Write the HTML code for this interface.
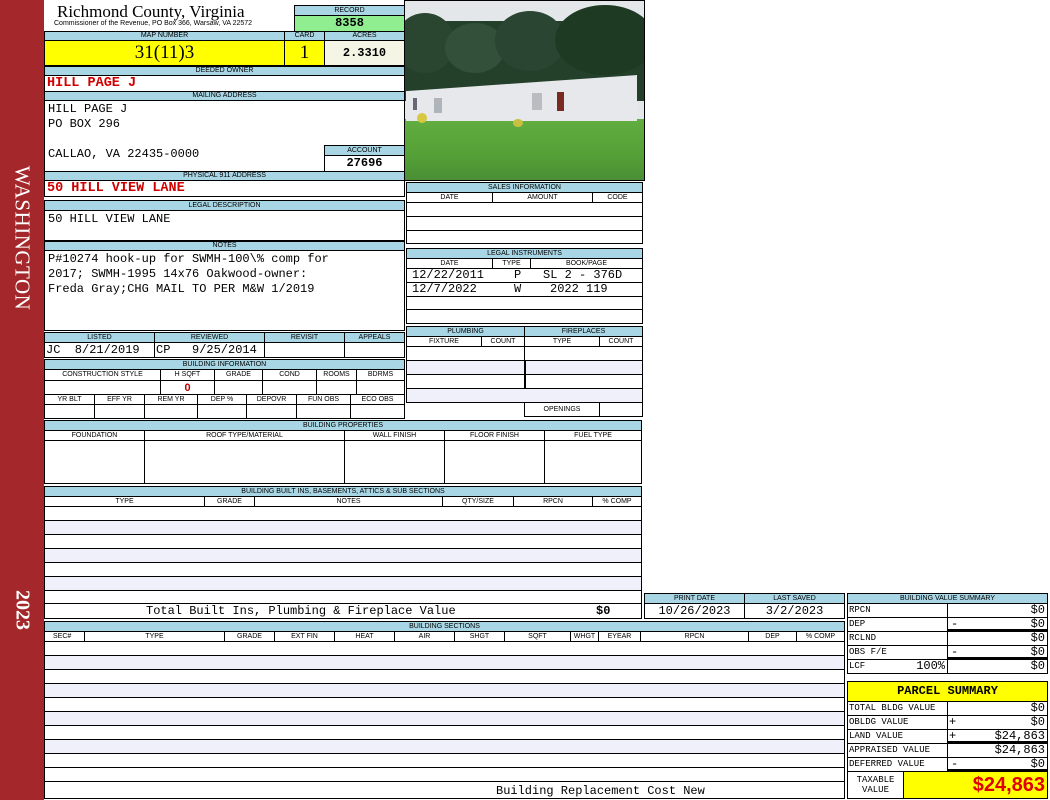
<!DOCTYPE html>
<html><head><meta charset="utf-8"><style>
*{box-sizing:border-box;margin:0;padding:0}
body{width:1050px;height:800px;background:#fff;position:relative;overflow:hidden;font-family:"Liberation Sans",sans-serif}
div{position:absolute}
.h{background:#a9d6e5;border:1px solid #000;font-size:7px;line-height:8px;text-align:center;color:#000;white-space:nowrap;overflow:hidden}
.b{border:1px solid #000;background:#fff}
.l{background:#f0f0fa}
.m{font-family:"Liberation Mono",monospace;font-size:12px;white-space:nowrap}
.s{font-size:9px!important}
.r{color:#d00000;font-weight:bold;font-size:13.5px}
</style></head><body>
<div style="left:0;top:0;width:44px;height:800px;background:#a4282b"></div>
<div style="left:22px;top:238px;transform:translate(-50%,-50%) rotate(90deg);color:#fff;font-family:'Liberation Serif',serif;font-size:21px;white-space:nowrap;letter-spacing:0.5px">WASHINGTON</div>
<div style="left:22px;top:610px;transform:translate(-50%,-50%) rotate(90deg);color:#fff;font-family:'Liberation Serif',serif;font-size:20px;font-weight:bold">2023</div>

<div style="left:57px;top:2px;font-family:'Liberation Serif',serif;font-size:17px;line-height:19px">Richmond County, Virginia</div>
<div style="left:54px;top:20px;font-size:7px;line-height:8px">Commissioner of the Revenue, PO Box 366, Warsaw, VA 22572</div>

<div class="h" style="left:294px;top:5px;width:111px;height:11px;line-height:9px">RECORD</div>
<div class="b m" style="left:294px;top:15px;width:111px;height:17px;background:#90ee90;text-align:center;font-weight:bold;line-height:15px">8358</div>

<div class="h" style="left:44px;top:31px;width:241px;height:10px">MAP NUMBER</div>
<div class="h" style="left:284px;top:31px;width:41px;height:10px">CARD</div>
<div class="h" style="left:324px;top:31px;width:81px;height:10px">ACRES</div>
<div class="b" style="left:44px;top:40px;width:241px;height:26px;background:#ffff00;text-align:center;font-family:'Liberation Serif',serif;font-size:19px;line-height:24px">31(11)3</div>
<div class="b" style="left:284px;top:40px;width:41px;height:26px;background:#ffff00;text-align:center;font-family:'Liberation Serif',serif;font-size:19px;line-height:24px">1</div>
<div class="b m" style="left:324px;top:40px;width:81px;height:26px;background:#f5f5e6;text-align:center;font-weight:bold;line-height:24px">2.3310</div>

<div class="h" style="left:44px;top:66px;width:361px;height:10px">DEEDED OWNER</div>
<div class="b m r" style="left:44px;top:75px;width:361px;height:17px;padding-left:2px;line-height:15px">HILL PAGE J</div>
<div class="h" style="left:44px;top:91px;width:361px;height:10px">MAILING ADDRESS</div>
<div class="b m" style="left:44px;top:100px;width:361px;height:72px;padding:1px 3px;line-height:15px">HILL PAGE J<br>PO BOX 296<br><br>CALLAO, VA 22435-0000</div>
<div class="h" style="left:324px;top:145px;width:81px;height:11px;line-height:9px">ACCOUNT</div>
<div class="b m" style="left:324px;top:155px;width:81px;height:17px;text-align:center;font-weight:bold;line-height:15px">27696</div>
<div class="h" style="left:44px;top:171px;width:361px;height:10px">PHYSICAL 911 ADDRESS</div>
<div class="b m r" style="left:44px;top:180px;width:361px;height:17px;padding-left:2px;line-height:15px">50 HILL VIEW LANE</div>

<div class="h" style="left:44px;top:200px;width:361px;height:11px;line-height:9px">LEGAL DESCRIPTION</div>
<div class="b m" style="left:44px;top:210px;width:361px;height:31px;padding:1px 3px;line-height:15px">50 HILL VIEW LANE</div>
<div class="h" style="left:44px;top:241px;width:361px;height:10px">NOTES</div>
<div class="b m" style="left:44px;top:250px;width:361px;height:81px;padding:1px 3px;line-height:15px">P#10274 hook-up for SWMH-100\% comp for<br>2017; SWMH-1995 14x76 Oakwood-owner:<br>Freda Gray;CHG MAIL TO PER M&amp;W 1/2019</div>

<!-- photo -->
<div style="left:404px;top:0;width:241px;height:181px;border:1px solid #000;overflow:hidden;background:#e4e7ea">
 <div style="left:0;top:20px;width:241px;height:80px;background:#24402a"></div>
 <div style="left:-10px;top:12px;width:60px;height:60px;background:#2a4630;border-radius:50%"></div>
 <div style="left:40px;top:22px;width:60px;height:50px;background:#32503a;border-radius:50%"></div>
 <div style="left:90px;top:10px;width:70px;height:60px;background:#2a4632;border-radius:50%"></div>
 <div style="left:150px;top:4px;width:100px;height:70px;background:#1e3a22;border-radius:50%"></div>
 <div style="left:0;top:118px;width:241px;height:63px;background:linear-gradient(#62ad40,#54a036 60%,#4a8c36)"></div>
 <div style="left:1px;top:74px;width:231px;height:46px;background:#e6e8ec;clip-path:polygon(0 35%,100% 0,100% 100%,0 100%)"></div>
 <div style="left:152px;top:91px;width:7px;height:19px;background:#7a2a20"></div>
 <div style="left:127px;top:92px;width:10px;height:17px;background:#b9bcc0"></div>
 <div style="left:29px;top:97px;width:8px;height:15px;background:#aeb4ba"></div>
 <div style="left:8px;top:97px;width:4px;height:12px;background:#667"></div>
 <div style="left:12px;top:112px;width:10px;height:10px;background:#d8c840;border-radius:50%"></div>
 <div style="left:108px;top:118px;width:10px;height:8px;background:#c8c040;border-radius:50%"></div>
</div>

<!-- sales -->
<div class="h" style="left:406px;top:182px;width:237px;height:11px;line-height:9px">SALES INFORMATION</div>
<div class="b" style="left:406px;top:192px;width:237px;height:52px"></div>
<div class="h" style="left:406px;top:192px;width:87px;height:11px;background:#fff;line-height:9px">DATE</div>
<div class="h" style="left:492px;top:192px;width:101px;height:11px;background:#fff;line-height:9px">AMOUNT</div>
<div class="h" style="left:592px;top:192px;width:51px;height:11px;background:#fff;line-height:9px">CODE</div>
<div class="b" style="left:406px;top:216px;width:237px;height:15px"></div>

<div class="h" style="left:406px;top:248px;width:237px;height:11px;line-height:9px">LEGAL INSTRUMENTS</div>
<div class="b" style="left:406px;top:258px;width:237px;height:66px"></div>
<div class="h" style="left:406px;top:258px;width:87px;height:11px;background:#fff;line-height:9px">DATE</div>
<div class="h" style="left:492px;top:258px;width:39px;height:11px;background:#fff;line-height:9px">TYPE</div>
<div class="h" style="left:530px;top:258px;width:113px;height:11px;background:#fff;line-height:9px">BOOK/PAGE</div>
<div class="b" style="left:406px;top:282px;width:237px;height:15px"></div>
<div class="b" style="left:406px;top:309px;width:237px;height:15px"></div>
<div class="m" style="left:412px;top:268px;line-height:14px">12/22/2011</div>
<div class="m" style="left:514px;top:268px;line-height:14px">P</div>
<div class="m" style="left:543px;top:268px;line-height:14px">SL 2 - 376D</div>
<div class="m" style="left:412px;top:282px;line-height:14px">12/7/2022</div>
<div class="m" style="left:514px;top:282px;line-height:14px">W</div>
<div class="m" style="left:550px;top:282px;line-height:14px">2022 119</div>

<!-- plumbing / fireplaces -->
<div class="h" style="left:406px;top:326px;width:119px;height:11px;line-height:9px">PLUMBING</div>
<div class="h" style="left:524px;top:326px;width:119px;height:11px;line-height:9px">FIREPLACES</div>
<div class="b" style="left:406px;top:336px;width:119px;height:67px"></div>
<div class="b" style="left:524px;top:336px;width:119px;height:81px"></div>
<div class="h" style="left:406px;top:336px;width:76px;height:11px;background:#fff;line-height:9px">FIXTURE</div>
<div class="h" style="left:481px;top:336px;width:44px;height:11px;background:#fff;line-height:9px">COUNT</div>
<div class="h" style="left:524px;top:336px;width:76px;height:11px;background:#fff;line-height:9px">TYPE</div>
<div class="h" style="left:599px;top:336px;width:44px;height:11px;background:#fff;line-height:9px">COUNT</div>
<div class="b" style="left:406px;top:360px;width:237px;height:15px;background:#f0f0fa"></div>
<div class="b" style="left:524px;top:360px;width:1px;height:43px"></div>
<div class="b" style="left:406px;top:388px;width:237px;height:15px;background:#f0f0fa"></div>
<div class="b" style="left:524px;top:402px;width:76px;height:15px;font-size:7px;text-align:center;line-height:13px">OPENINGS</div>

<!-- listed -->
<div class="h" style="left:44px;top:332px;width:111px;height:11px;line-height:9px">LISTED</div>
<div class="h" style="left:154px;top:332px;width:111px;height:11px;line-height:9px">REVIEWED</div>
<div class="h" style="left:264px;top:332px;width:81px;height:11px;line-height:9px">REVISIT</div>
<div class="h" style="left:344px;top:332px;width:61px;height:11px;line-height:9px">APPEALS</div>
<div class="b m" style="left:44px;top:342px;width:111px;height:16px;line-height:14px;padding-left:1px">JC&nbsp;&nbsp;8/21/2019</div>
<div class="b m" style="left:154px;top:342px;width:111px;height:16px;line-height:14px;padding-left:1px">CP&nbsp;&nbsp;&nbsp;9/25/2014</div>
<div class="b" style="left:264px;top:342px;width:81px;height:16px"></div>
<div class="b" style="left:344px;top:342px;width:61px;height:16px"></div>

<div class="h" style="left:44px;top:359px;width:361px;height:11px;line-height:9px">BUILDING INFORMATION</div>
<div class="h" style="left:44px;top:369px;width:117px;height:12px;background:#fff;line-height:10px">CONSTRUCTION STYLE</div>
<div class="h" style="left:160px;top:369px;width:55px;height:12px;background:#fff;line-height:10px">H SQFT</div>
<div class="h" style="left:214px;top:369px;width:49px;height:12px;background:#fff;line-height:10px">GRADE</div>
<div class="h" style="left:262px;top:369px;width:55px;height:12px;background:#fff;line-height:10px">COND</div>
<div class="h" style="left:316px;top:369px;width:41px;height:12px;background:#fff;line-height:10px">ROOMS</div>
<div class="h" style="left:356px;top:369px;width:49px;height:12px;background:#fff;line-height:10px">BDRMS</div>
<div class="b" style="left:44px;top:380px;width:117px;height:15px"></div>
<div class="b" style="left:160px;top:380px;width:55px;height:15px;color:#c00000;font-weight:bold;font-size:11px;text-align:center;line-height:14px">0</div>
<div class="b" style="left:214px;top:380px;width:49px;height:15px"></div>
<div class="b" style="left:262px;top:380px;width:55px;height:15px"></div>
<div class="b" style="left:316px;top:380px;width:41px;height:15px"></div>
<div class="b" style="left:356px;top:380px;width:49px;height:15px"></div>
<div class="h" style="left:44px;top:394px;width:51px;height:11px;background:#fff;line-height:9px">YR BLT</div>
<div class="h" style="left:94px;top:394px;width:51px;height:11px;background:#fff;line-height:9px">EFF YR</div>
<div class="h" style="left:144px;top:394px;width:54px;height:11px;background:#fff;line-height:9px">REM YR</div>
<div class="h" style="left:197px;top:394px;width:50px;height:11px;background:#fff;line-height:9px">DEP %</div>
<div class="h" style="left:246px;top:394px;width:51px;height:11px;background:#fff;line-height:9px">DEPOVR</div>
<div class="h" style="left:296px;top:394px;width:55px;height:11px;background:#fff;line-height:9px">FUN OBS</div>
<div class="h" style="left:350px;top:394px;width:55px;height:11px;background:#fff;line-height:9px">ECO OBS</div>
<div class="b" style="left:44px;top:404px;width:51px;height:15px"></div>
<div class="b" style="left:94px;top:404px;width:51px;height:15px"></div>
<div class="b" style="left:144px;top:404px;width:54px;height:15px"></div>
<div class="b" style="left:197px;top:404px;width:50px;height:15px"></div>
<div class="b" style="left:246px;top:404px;width:51px;height:15px"></div>
<div class="b" style="left:296px;top:404px;width:55px;height:15px"></div>
<div class="b" style="left:350px;top:404px;width:55px;height:15px"></div>

<!-- building properties -->
<div class="h" style="left:44px;top:420px;width:598px;height:11px;line-height:9px">BUILDING PROPERTIES</div>
<div class="h" style="left:44px;top:430px;width:101px;height:11px;background:#fff;line-height:9px">FOUNDATION</div>
<div class="h" style="left:144px;top:430px;width:201px;height:11px;background:#fff;line-height:9px">ROOF TYPE/MATERIAL</div>
<div class="h" style="left:344px;top:430px;width:101px;height:11px;background:#fff;line-height:9px">WALL FINISH</div>
<div class="h" style="left:444px;top:430px;width:101px;height:11px;background:#fff;line-height:9px">FLOOR FINISH</div>
<div class="h" style="left:544px;top:430px;width:98px;height:11px;background:#fff;line-height:9px">FUEL TYPE</div>
<div class="b" style="left:44px;top:440px;width:101px;height:44px"></div>
<div class="b" style="left:144px;top:440px;width:201px;height:44px"></div>
<div class="b" style="left:344px;top:440px;width:101px;height:44px"></div>
<div class="b" style="left:444px;top:440px;width:101px;height:44px"></div>
<div class="b" style="left:544px;top:440px;width:98px;height:44px"></div>

<!-- built ins -->
<div class="h" style="left:44px;top:486px;width:598px;height:11px;line-height:9px">BUILDING BUILT INS, BASEMENTS, ATTICS &amp; SUB SECTIONS</div>
<div class="h" style="left:44px;top:496px;width:161px;height:11px;background:#fff;line-height:9px">TYPE</div>
<div class="h" style="left:204px;top:496px;width:51px;height:11px;background:#fff;line-height:9px">GRADE</div>
<div class="h" style="left:254px;top:496px;width:189px;height:11px;background:#fff;line-height:9px">NOTES</div>
<div class="h" style="left:442px;top:496px;width:72px;height:11px;background:#fff;line-height:9px">QTY/SIZE</div>
<div class="h" style="left:513px;top:496px;width:80px;height:11px;background:#fff;line-height:9px">RPCN</div>
<div class="h" style="left:592px;top:496px;width:50px;height:11px;background:#fff;line-height:9px">% COMP</div>
<div class="b" style="left:44px;top:506px;width:598px;height:113px"></div>
<div class="b l" style="left:44px;top:520px;width:598px;height:15px"></div>
<div class="b l" style="left:44px;top:548px;width:598px;height:15px"></div>
<div class="b l" style="left:44px;top:576px;width:598px;height:15px"></div>
<div class="b" style="left:44px;top:603px;width:598px;height:16px"></div>
<div class="m" style="left:146px;top:604px;line-height:14px">Total Built Ins, Plumbing &amp; Fireplace Value</div>
<div class="m" style="left:596px;top:604px;line-height:14px;font-weight:bold">$0</div>

<div class="h" style="left:644px;top:593px;width:101px;height:11px;line-height:9px">PRINT DATE</div>
<div class="h" style="left:744px;top:593px;width:101px;height:11px;line-height:9px">LAST SAVED</div>
<div class="b m" style="left:644px;top:603px;width:101px;height:16px;text-align:center;line-height:14px">10/26/2023</div>
<div class="b m" style="left:744px;top:603px;width:101px;height:16px;text-align:center;line-height:14px">3/2/2023</div>

<!-- building sections -->
<div class="h" style="left:44px;top:621px;width:801px;height:11px;line-height:9px">BUILDING SECTIONS</div>
<div class="h" style="left:44px;top:631px;width:41px;height:11px;background:#fff;line-height:9px;text-align:left;padding-left:8px">SEC#</div>
<div class="h" style="left:84px;top:631px;width:141px;height:11px;background:#fff;line-height:9px">TYPE</div>
<div class="h" style="left:224px;top:631px;width:51px;height:11px;background:#fff;line-height:9px">GRADE</div>
<div class="h" style="left:274px;top:631px;width:61px;height:11px;background:#fff;line-height:9px">EXT FIN</div>
<div class="h" style="left:334px;top:631px;width:61px;height:11px;background:#fff;line-height:9px">HEAT</div>
<div class="h" style="left:394px;top:631px;width:61px;height:11px;background:#fff;line-height:9px">AIR</div>
<div class="h" style="left:454px;top:631px;width:51px;height:11px;background:#fff;line-height:9px">SHGT</div>
<div class="h" style="left:504px;top:631px;width:67px;height:11px;background:#fff;line-height:9px">SQFT</div>
<div class="h" style="left:570px;top:631px;width:29px;height:11px;background:#fff;line-height:9px">WHGT</div>
<div class="h" style="left:598px;top:631px;width:43px;height:11px;background:#fff;line-height:9px">EYEAR</div>
<div class="h" style="left:640px;top:631px;width:109px;height:11px;background:#fff;line-height:9px">RPCN</div>
<div class="h" style="left:748px;top:631px;width:49px;height:11px;background:#fff;line-height:9px">DEP</div>
<div class="h" style="left:796px;top:631px;width:49px;height:11px;background:#fff;line-height:9px">% COMP</div>
<div class="b" style="left:44px;top:641px;width:801px;height:158px"></div>
<div class="b l" style="left:44px;top:655px;width:801px;height:15px"></div>
<div class="b l" style="left:44px;top:683px;width:801px;height:15px"></div>
<div class="b l" style="left:44px;top:711px;width:801px;height:15px"></div>
<div class="b l" style="left:44px;top:739px;width:801px;height:15px"></div>
<div class="b" style="left:44px;top:767px;width:801px;height:15px"></div>
<div class="m" style="left:496px;top:784px;line-height:14px">Building Replacement Cost New</div>

<!-- value summary -->
<div class="h" style="left:847px;top:593px;width:201px;height:11px;line-height:9px">BUILDING VALUE SUMMARY</div>
<div class="b m s" style="left:847px;top:603px;width:101px;height:15px;line-height:13px;padding-left:1px">RPCN</div>
<div class="b m" style="left:947px;top:603px;width:101px;height:15px;text-align:right;padding-right:2px;line-height:13px">$0</div>
<div class="b m s" style="left:847px;top:617px;width:101px;height:15px;line-height:13px;padding-left:1px">DEP</div>
<div class="b m" style="left:947px;top:617px;width:101px;height:15px;text-align:right;padding-right:2px;line-height:13px;border-bottom:3px solid #000"><span style="float:left;padding-left:3px">-</span>$0</div>
<div class="b m s" style="left:847px;top:631px;width:101px;height:15px;line-height:13px;padding-left:1px">RCLND</div>
<div class="b m" style="left:947px;top:631px;width:101px;height:15px;text-align:right;padding-right:2px;line-height:13px">$0</div>
<div class="b m s" style="left:847px;top:645px;width:101px;height:15px;line-height:13px;padding-left:1px">OBS F/E</div>
<div class="b m" style="left:947px;top:645px;width:101px;height:15px;text-align:right;padding-right:2px;line-height:13px;border-bottom:3px solid #000"><span style="float:left;padding-left:3px">-</span>$0</div>
<div class="b m s" style="left:847px;top:659px;width:101px;height:15px;line-height:13px;padding-left:1px">LCF<span style="float:right;font-size:12px;padding-right:2px">100%</span></div>
<div class="b m" style="left:947px;top:659px;width:101px;height:15px;text-align:right;padding-right:2px;line-height:13px">$0</div>

<div class="b" style="left:847px;top:681px;width:201px;height:21px;background:#ffff00;text-align:center;font-family:'Liberation Mono',monospace;font-weight:bold;font-size:12px;line-height:19px">PARCEL SUMMARY</div>
<div class="b m s" style="left:847px;top:701px;width:101px;height:15px;line-height:13px;padding-left:1px">TOTAL BLDG VALUE</div>
<div class="b m" style="left:947px;top:701px;width:101px;height:15px;text-align:right;padding-right:2px;line-height:13px">$0</div>
<div class="b m s" style="left:847px;top:715px;width:101px;height:15px;line-height:13px;padding-left:1px">OBLDG VALUE</div>
<div class="b m" style="left:947px;top:715px;width:101px;height:15px;text-align:right;padding-right:2px;line-height:13px"><span style="float:left;padding-left:1px">+</span>$0</div>
<div class="b m s" style="left:847px;top:729px;width:101px;height:15px;line-height:13px;padding-left:1px">LAND VALUE</div>
<div class="b m" style="left:947px;top:729px;width:101px;height:15px;text-align:right;padding-right:2px;line-height:13px;border-bottom:3px solid #000"><span style="float:left;padding-left:1px">+</span>$24,863</div>
<div class="b m s" style="left:847px;top:743px;width:101px;height:15px;line-height:13px;padding-left:1px">APPRAISED VALUE</div>
<div class="b m" style="left:947px;top:743px;width:101px;height:15px;text-align:right;padding-right:2px;line-height:13px">$24,863</div>
<div class="b m s" style="left:847px;top:757px;width:101px;height:15px;line-height:13px;padding-left:1px">DEFERRED VALUE</div>
<div class="b m" style="left:947px;top:757px;width:101px;height:15px;text-align:right;padding-right:2px;line-height:13px;border-bottom:3px solid #000"><span style="float:left;padding-left:3px">-</span>$0</div>
<div class="b m s" style="left:847px;top:771px;width:57px;height:28px;line-height:10px;text-align:center;padding-top:3px">TAXABLE<br>VALUE</div>
<div class="b" style="left:903px;top:771px;width:145px;height:28px;background:#ffff00;text-align:right;padding-right:2px;color:#e00000;font-weight:bold;font-size:20px;line-height:26px">$24,863</div>
</body></html>
